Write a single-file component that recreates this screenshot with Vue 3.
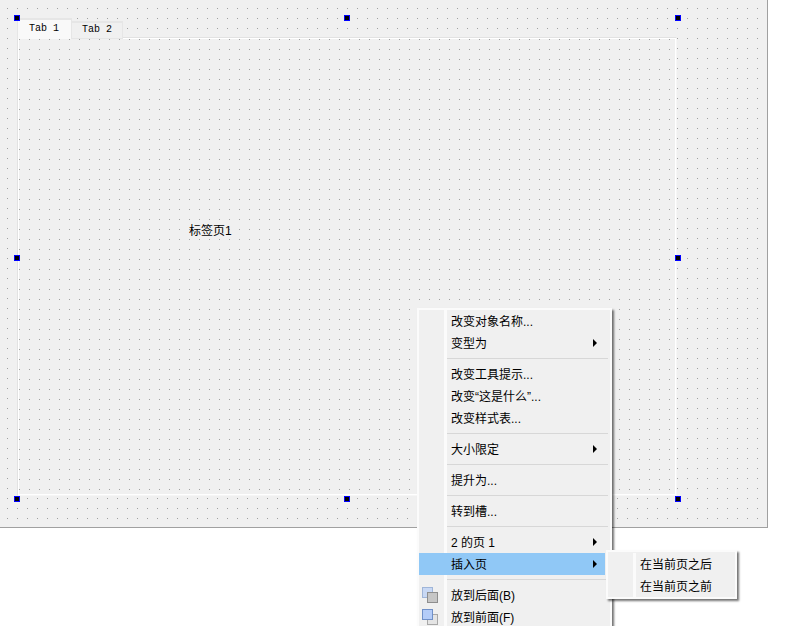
<script setup>
const handles = [
  [14, 15], [344, 15], [675, 15],
  [14, 255], [675, 255],
  [14, 496], [344, 496], [675, 496]
]

const mainMenu = [
  { label: '改变对象名称...' },
  { label: '变型为', arrow: true },
  { sep: true },
  { label: '改变工具提示...' },
  { label: '改变“这是什么”...' },
  { label: '改变样式表...' },
  { sep: true },
  { label: '大小限定', arrow: true },
  { sep: true },
  { label: '提升为...' },
  { sep: true },
  { label: '转到槽...' },
  { sep: true },
  { label: '2 的页 1', arrow: true },
  { label: '插入页', arrow: true, active: true },
  { sep: true },
  { label: '放到后面(B)', icon: 'back' },
  { label: '放到前面(F)', icon: 'front' }
]

const subMenu = ['在当前页之后', '在当前页之前']
</script>

<template>
  <div class="screen">
    <section class="canvas">
      <svg class="dots" width="100%" height="100%">
        <defs>
          <pattern id="outer-dots" x="7" y="8" width="10" height="10" patternUnits="userSpaceOnUse">
            <rect width="1" height="1" fill="#a0a0a0" />
          </pattern>
        </defs>
        <rect width="100%" height="100%" fill="url(#outer-dots)" />
      </svg>

      <div class="tab-widget">
        <div class="tab-bar">
          <div class="tab tab-current">Tab 1</div>
          <div class="tab">Tab 2</div>
        </div>
        <div class="pane">
          <svg class="dots" width="100%" height="100%">
            <defs>
              <pattern id="inner-dots" x="1" y="1" width="10" height="10" patternUnits="userSpaceOnUse">
                <rect width="1" height="1" fill="#a0a0a0" />
              </pattern>
            </defs>
            <rect width="100%" height="100%" fill="url(#inner-dots)" />
          </svg>
          <span class="page-label">标签页1</span>
        </div>
      </div>

      <i
        v-for="(h, i) in handles"
        :key="i"
        class="handle"
        :style="{ left: h[0] + 'px', top: h[1] + 'px' }"
      ></i>
    </section>

    <div class="menu main-menu">
      <template v-for="(item, i) in mainMenu" :key="i">
        <div v-if="item.sep" class="sep"></div>
        <div v-else class="row" :class="{ active: item.active }">
          <span class="gutter">
            <svg v-if="item.icon === 'back'" width="16" height="16" viewBox="0 0 16 16">
              <rect x="0.5" y="0.5" width="10" height="10" fill="#c8d8f4" stroke="#9fb5d8" />
              <rect x="5.5" y="5.5" width="10" height="10" fill="#c6c6c6" stroke="#8e8e8e" />
            </svg>
            <svg v-if="item.icon === 'front'" width="16" height="16" viewBox="0 0 16 16">
              <rect x="5.5" y="5.5" width="10" height="10" fill="#e4e4e4" stroke="#a8a8a8" />
              <rect x="0.5" y="0.5" width="10" height="10" fill="#b4ccf8" stroke="#7090c8" />
            </svg>
          </span>
          <span class="strip"></span>
          <span class="text">{{ item.label }}</span>
          <span v-if="item.arrow" class="arrow"></span>
        </div>
      </template>
    </div>

    <div class="menu sub-menu">
      <div v-for="label in subMenu" :key="label" class="row">
        <span class="gutter"></span>
        <span class="strip"></span>
        <span class="text">{{ label }}</span>
      </div>
    </div>
  </div>
</template>

<style>
html, body {
  margin: 0;
  background: #fff;
  overflow: hidden;
}
</style>

<style scoped>
.screen {
  position: relative;
  width: 789px;
  height: 626px;
  overflow: hidden;
  background: #fff;
  font-family: "Liberation Sans", "Noto Sans CJK SC", sans-serif;
  font-size: 12px;
  color: #000;
}

.canvas {
  position: relative;
  box-sizing: border-box;
  width: 768px;
  height: 528px;
  padding: 18px 0 0 17px;
  background: #f0f0f0;
  border-right: 1px solid #a0a0a0;
  border-bottom: 1px solid #a0a0a0;
}

.dots {
  position: absolute;
  inset: 0;
}

.tab-widget {
  position: relative;
  width: 660px;
}

.tab-bar {
  display: flex;
  align-items: flex-end;
  height: 20px;
}

.tab {
  position: relative;
  z-index: 1;
  box-sizing: border-box;
  width: 51px;
  height: 18px;
  margin-bottom: -1px;
  line-height: 13px;
  text-align: center;
  background: #f0f0f0;
  border: 1px solid #e6e6e6;
  border-top-width: 2px;
  border-left: 0;
  font-family: "Liberation Mono", monospace;
  font-size: 10px;
}

.tab-current {
  width: 55px;
  height: 21px;
  padding-right: 1px;
  line-height: 18px;
  background: #f9f9f9;
  border-left: 1px solid #e6e6e6;
  border-bottom: 0;
}

.pane {
  position: relative;
  box-sizing: border-box;
  height: 459px;
  margin-top: -1px;
  background: #f0f0f0;
  border: 1px solid #e2e2e2;
  border-right-color: #f6f6f6;
  border-bottom-color: #f6f6f6;
  box-shadow: inset 1px 1px 0 #fff, inset -1px -1px 0 #fff;
}

.page-label {
  position: absolute;
  left: 171px;
  top: 184px;
  line-height: 18px;
}

.handle {
  position: absolute;
  z-index: 2;
  box-sizing: border-box;
  width: 6px;
  height: 6px;
  background: #000;
  border: 1px solid #0000ff;
}

.menu {
  position: absolute;
  box-sizing: border-box;
  background: #f0f0f0;
  border: 1px solid #fbfbfb;
  box-shadow: inset 0 0 0 1px #fbfbfb, 2px 2px 2px rgba(0, 0, 0, 0.55);
}

.main-menu {
  left: 417px;
  top: 308px;
  width: 195px;
  padding: 1px 2px 1px 1px;
}

.sub-menu {
  left: 606px;
  top: 550px;
  width: 131px;
  padding: 2px 2px 1px 1px;
}

.row {
  position: relative;
  display: flex;
  align-items: center;
  height: 22px;
}

.gutter {
  display: flex;
  align-items: center;
  flex: none;
  box-sizing: border-box;
  width: 25px;
  height: 100%;
  padding-left: 3px;
}

.strip {
  flex: none;
  width: 3px;
  height: 100%;
  background: #fbfbfb;
}

.text {
  margin-left: 4px;
  padding-bottom: 2px;
  white-space: nowrap;
}

.active {
  margin-right: 4px;
  background: #90c8f6;
}

.active .strip {
  background: transparent;
}

.arrow {
  position: absolute;
  right: 12px;
  top: 7px;
  width: 0;
  height: 0;
  border-left: 4px solid #000;
  border-top: 4px solid transparent;
  border-bottom: 4px solid transparent;
}

.active .arrow {
  right: 8px;
}

.sep {
  position: relative;
  height: 9px;
  background: linear-gradient(#d7d7d7, #d7d7d7) 28px 4px / 161px 1px no-repeat;
}

.sep::before {
  content: "";
  position: absolute;
  left: 25px;
  top: 0;
  width: 3px;
  height: 100%;
  background: #fbfbfb;
}
</style>
